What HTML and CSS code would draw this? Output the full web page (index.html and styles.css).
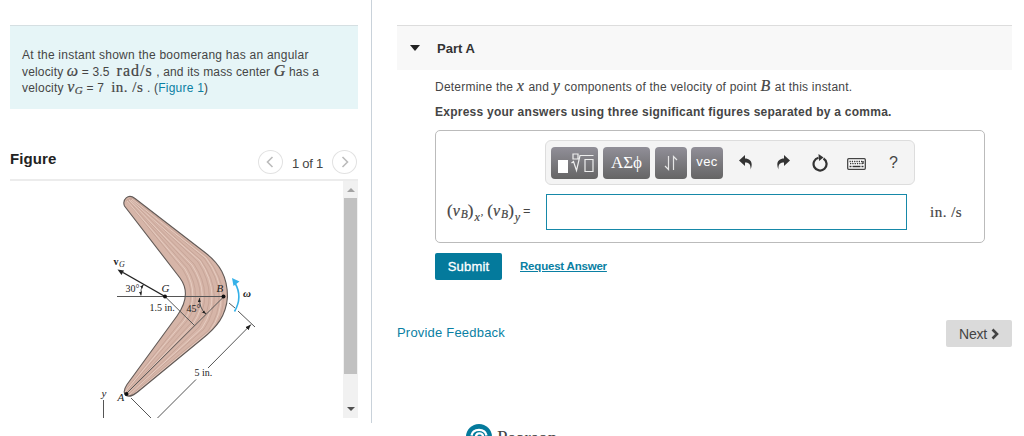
FILE: index.html
```
<!DOCTYPE html>
<html lang="en">
<head>
    <meta charset="UTF-8">
    <meta name="viewport" content="width=device-width, initial-scale=1.0">
    <title>Part A</title>
    <link rel="stylesheet" href="styles.css">
</head>
<body>
    <div class="page">
        <div class="sidebar">
            <div class="problem">
                <div class="line l1">At the instant shown the boomerang has an angular</div>
                <div class="line l2">velocity <i class="math">ω</i> = 3.5&nbsp; <span class="unit">rad/s</span> , and its mass center <i class="math">G</i> has a</div>
                <div class="line l3">velocity <i class="math">v<small>G</small></i> = 7&nbsp; <span class="unit">in. /s</span> . (<a href="#">Figure 1</a>)</div>
            </div>
            <div class="figure-header">
                <h2>Figure</h2>
                <div class="pager">
                    <button class="round"><svg width="8" height="12" viewBox="0 0 8 12"><path d="M6.5 1 1.5 6l5 5"/></svg></button>
                    <span>1 of 1</span>
                    <button class="round"><svg width="8" height="12" viewBox="0 0 8 12"><path d="m1.5 1 5 5-5 5"/></svg></button>
                </div>
            </div>
            <div class="figure-body">
                <svg class="drawing" width="333" height="237" viewBox="10 181 333 237">
                    <defs>
                        <clipPath id="wood">
                            <path d="M124.500 206C122 200 128 193 135 198.500L205 252.500C220 264 227.500 277 227.500 297C226 316 217 327 202 339L140 390C134 395 130 397.500 126 395.500C123 393 124 389 127 384.500L177 316C187 302 188 289 180 278Z"/>
                        </clipPath>
                        <marker id="arrow" viewBox="0 0 8 6" markerWidth="6" markerHeight="5" refX="8" refY="3" orient="auto-start-reverse" markerUnits="userSpaceOnUse"><path d="M0 0 8 3 0 6z" fill="#222"/></marker>
                        <marker id="tip" viewBox="0 0 8 6" markerWidth="4" markerHeight="3.500" refX="8" refY="3" orient="auto-start-reverse" markerUnits="userSpaceOnUse"><path d="M0 0 8 3 0 6z" fill="#222"/></marker>
                    </defs>
                    <!-- boomerang -->
                    <path fill="#d6b5a8" d="M124.500 206C122 200 128 193 135 198.500L205 252.500C220 264 227.500 277 227.500 297C226 316 217 327 202 339L140 390C134 395 130 397.500 126 395.500C123 393 124 389 127 384.500L177 316C187 302 188 289 180 278Z"/>
                    <g clip-path="url(#wood)" fill="none" stroke="#c29f92" stroke-width=".7">
                        <path d="M126 200 183 270Q199 296 182 320L125 391"/>
                        <path d="M127 199 187 268Q204 296 187 321L126 392"/>
                        <path d="M128 199 190 266Q210 296 191 323L127 393"/>
                        <path d="M129 198 194 264Q215 296 195 325L128 393"/>
                        <path d="M130 198 198 262Q220 296 199 327L129 394"/>
                        <path d="M131 198 201 260Q226 296 204 329L130 394"/>
                        <path d="M132 198 204 258Q232 296 208 331L131 395"/>
                        <path d="M133 198 207 257Q237 296 212 332L132 395"/>
                    </g>
                    <g clip-path="url(#wood)" fill="none" stroke="#ead2c7" stroke-width=".8">
                        <path d="M127 201 185 269Q201 296 184 321L125 392"/>
                        <path d="M129 200 192 265Q212 296 193 324L127 394"/>
                        <path d="M131 200 200 261Q223 296 202 328L129 395"/>
                        <path d="M132 199 206 258Q234 296 210 331L131 396"/>
                    </g>
                    <path fill="none" stroke="#625a57" stroke-width="1.100" d="M124.500 206C122 200 128 193 135 198.500L205 252.500C220 264 227.500 277 227.500 297C226 316 217 327 202 339L140 390C134 395 130 397.500 126 395.500C123 393 124 389 127 384.500L177 316C187 302 188 289 180 278Z"/>
                    <!-- construction and dimension lines -->
                    <g fill="none" stroke="#555" stroke-width="1">
                        <path d="M117 296.500H224M165 296.500 194.500 325.500M126 394 224 296.500"/>
                        <path d="M229 303l6 5M238 311l17 16M131 398l21 21M196 379.500 157 418.500M103.500 400v19"/>
                        <path d="M208 368 251 324.500" marker-end="url(#arrow)"/>
                        <path d="M143.500 284.500Q140 289 141 295.500" marker-start="url(#tip)" marker-end="url(#tip)"/>
                        <path d="M199.500 298Q199 308 206 314" marker-start="url(#tip)" marker-end="url(#tip)"/>
                    </g>
                    <path d="M165 296.500 123 272.500" stroke="#222" stroke-width="1.400"/>
                    <path d="M117.500 269.500 124 270.500 121.500 275z" fill="#222"/>
                    <path d="M234.500 311.500Q243 297 235 283" fill="none" stroke="#35b1e8" stroke-width="1.600"/>
                    <path d="M232 278 239.500 281.500 233.500 286z" fill="#35b1e8"/>
                    <g fill="#111">
                        <circle cx="165" cy="296.500" r="2"/>
                        <circle cx="223.500" cy="296.500" r="2"/>
                        <circle cx="126.500" cy="394" r="2"/>
                    </g>
                    <g class="labels">
                        <text x="113.500" y="265" class="bold">v</text>
                        <text x="119" y="267" class="ital sub">G</text>
                        <text x="125.500" y="292">30°</text>
                        <text x="161.500" y="292" class="ital">G</text>
                        <text x="216.500" y="292" class="ital">B</text>
                        <text x="243" y="297" class="bold ital">ω</text>
                        <text x="149.500" y="311">1.5 in.</text>
                        <text x="186.500" y="312">45°</text>
                        <text x="194.500" y="376">5 in.</text>
                        <text x="117.500" y="401" class="ital">A</text>
                        <text x="101.500" y="397" class="ital">y</text>
                    </g>
                </svg>
                <div class="scrollbar">
                    <svg width="8" height="4" viewBox="0 0 8 4"><path fill="#a3a3a3" d="M0 4 4 0l4 4z"/></svg>
                    <div class="thumb"></div>
                    <svg width="8" height="4" viewBox="0 0 8 4"><path fill="#505050" d="M0 0h8L4 4z"/></svg>
                </div>
            </div>
        </div>
        <div class="main">
            <div class="part-header">
                <svg width="10" height="6" viewBox="0 0 10 6"><path fill="#222" d="M0 0h10L5 6z"/></svg>
                <h3>Part A</h3>
            </div>
            <div class="part-body">
                <p class="question">Determine the <i class="math">x</i> and <i class="math">y</i> components of the velocity of point <i class="math">B</i> at this instant.</p>
                <p class="instruction">Express your answers using three significant figures separated by a comma.</p>
                <div class="answer-box">
                    <div class="toolbar">
                        <button class="tool wide">
                            <svg width="38" height="22" viewBox="0 0 38 22"><path fill="#fff" d="M2 8h10v13H2z"/><g fill="none" stroke="#eee" stroke-width="1.200"><path d="M17 2h5v5h-5zM15.500 11l2-1.500 3 9L24 3.500h13.500M29 7.500h8v12h-8z"/></g></svg>
                        </button>
                        <button class="tool wide greek">ΑΣϕ</button>
                        <button class="tool arrows"><svg width="14" height="16" viewBox="0 0 14 16"><path fill="none" stroke="#e6e6e6" stroke-width="1.200" d="M4.500 1v13.500M1 11l3.500 3.500V1M9.500 15V1.500M13 5 9.500 1.500V15"/></svg></button>
                        <button class="tool vec">vec</button>
                        <svg class="icon undo" width="14" height="15" viewBox="0 0 14 15"><path fill="#333" d="M0 5.500 6 0v3.500C11.500 3.500 14.500 8 11.500 14.500 12 9.500 10 7.500 6 7.500V11z"/></svg>
                        <svg class="icon redo" width="14" height="15" viewBox="0 0 14 15"><path fill="#333" d="M14 5.500 8 0v3.500C2.500 3.500-.5 8 2.500 14.500 2 9.500 4 7.500 8 7.500V11z"/></svg>
                        <svg class="icon reset" width="16" height="18" viewBox="0 0 16 18"><path fill="none" stroke="#333" stroke-width="2.200" d="M11.500 4.500A6.500 6.500 0 1 1 6.500 3.700"/><path fill="#333" d="M6.500 0 11.500 3.500 7 7z"/></svg>
                        <svg class="icon keyboard" width="19" height="12" viewBox="0 0 19 12"><rect x=".7" y=".7" width="17.600" height="10.600" rx="1" fill="#fff" stroke="#444" stroke-width="1.300"/><path stroke="#333" stroke-width="1.300" stroke-dasharray="1.300 1" d="M2.500 3.500h14M3 5.700h13.500"/><path stroke="#333" stroke-width="1.300" d="M2.500 8.500h2M5.500 8.500h8M14.500 8.500h2M16 3v3"/></svg>
                        <span class="help">?</span>
                    </div>
                    <div class="entry">
                        <label for="answer"><span class="paren">(</span><i>v<small>B</small></i><span class="paren">)</span><i class="index">x</i><span class="comma">,</span><span class="paren">(</span><i>v<small>B</small></i><span class="paren">)</span><i class="index">y</i><span class="equals">=</span></label>
                        <input type="text" id="answer">
                        <span class="unit">in. /s</span>
                    </div>
                </div>
                <div class="actions">
                    <button class="submit">Submit</button>
                    <a href="#">Request Answer</a>
                </div>
            </div>
            <div class="footer">
                <a href="#">Provide Feedback</a>
                <button class="next">Next <svg width="8" height="12" viewBox="0 0 8 12"><path fill="none" stroke="#444" stroke-width="2.600" d="m1.500 1.500 4.500 4.500-4.500 4.500"/></svg></button>
            </div>
            <div class="brand">
                <svg width="26" height="26" viewBox="0 0 26 26"><circle cx="13" cy="13" r="13" fill="#047a9c"/><path fill="none" stroke="#fff" stroke-width="2.400" d="M5.500 11.500C7 4 19 4 20.500 11.500M10 13c0-5 7-4.500 7-.5 0 3-3.500 2.500-3.500 5"/></svg>
                <span>Pearson</span>
            </div>
        </div>
    </div>
</body>
</html>
```
FILE: styles.css
```
* {
    box-sizing: border-box;
}
body {
    margin: 0;
    height: 436px;
    overflow: hidden;
    background: #fff;
    color: #454545;
    font-family: "Liberation Sans", Arial, sans-serif;
    font-size: 12px;
}
h2, h3, p {
    margin: 0;
}
button {
    border: 0;
    padding: 0;
    font-family: inherit;
}
svg {
    display: block;
    flex: none;
}
a {
    color: #0a7fa3;
    text-decoration: none;
}
.page {
    display: flex;
    height: 436px;
}
.sidebar {
    width: 372px;
    height: 423px;
    padding: 25px 13px 0 10px;
    border-right: 1px solid #c9d2da;
    flex: none;
}
.problem {
    height: 84px;
    padding: 21px 0 0 12px;
    background: #e6f5f7;
    border-top: 1px solid #d5dfe2;
}
.line {
    height: 16.5px;
    line-height: 16px;
    white-space: nowrap;
}
.l1 {
    letter-spacing: 0.24px;
}
.l2 {
    letter-spacing: 0.16px;
}
.l3 {
    letter-spacing: 0.22px;
}
.math, .unit {
    font-family: "Liberation Serif", "Times New Roman", serif;
    font-size: 16px;
    line-height: 1px;
    -webkit-text-stroke: 0.2px;
}
.unit {
    font-size: 15px;
    letter-spacing: 0.5px;
}
.l2 .unit {
    font-size: 16px;
    letter-spacing: 1px;
}
.math small {
    font-size: 11px;
    position: relative;
    top: 2px;
}
.figure-header {
    display: flex;
    justify-content: space-between;
    height: 72px;
    padding-top: 40px;
    border-bottom: 2px solid #ececec;
}
.figure-header h2 {
    font-size: 15px;
    line-height: 20px;
    color: #222;
    letter-spacing: 0.1px;
}
.pager {
    display: flex;
    align-items: center;
    gap: 9px;
    height: 26px;
    padding-right: 1px;
    font-size: 13px;
    letter-spacing: -0.25px;
}
.pager span {
    padding-top: 2px;
}
.round {
    display: flex;
    align-items: center;
    justify-content: center;
    width: 25px;
    height: 24px;
    border: 1px solid #e2e2e2;
    border-radius: 50%;
    background: #fff;
}
.round path {
    fill: none;
    stroke: #bbb;
    stroke-width: 1.6;
}
.figure-body {
    display: flex;
    height: 237px;
}
.labels text {
    font-family: "Liberation Serif", "Times New Roman", serif;
    font-size: 10px;
    fill: #222;
}
.labels .bold {
    font-weight: bold;
}
.labels .ital {
    font-style: italic;
    font-size: 11px;
}
.labels .sub {
    font-size: 8px;
}
.scrollbar {
    display: flex;
    flex-direction: column;
    align-items: center;
    width: 16px;
    height: 237px;
    padding: 7px 0;
    background: #f1f1f1;
}
.thumb {
    width: 13px;
    height: 177px;
    margin: 6px 0 33px;
    background: #c1c1c1;
}
.main {
    width: 640px;
    padding: 25px 0 0 25px;
}
.part-header {
    display: flex;
    align-items: center;
    height: 45px;
    padding-left: 13px;
    gap: 17px;
    background: #f8f8f8;
    border-top: 1px solid #ddd;
}
.part-header h3 {
    font-size: 13px;
    color: #333;
}
.part-body {
    padding: 9px 27px 0 38px;
}
.question, .instruction {
    white-space: nowrap;
    line-height: 16px;
}
.question {
    letter-spacing: 0.22px;
}
.question .math {
    letter-spacing: 1px;
}
.instruction {
    margin-top: 9px;
    font-weight: bold;
    letter-spacing: 0.25px;
}
.answer-box {
    width: 550px;
    height: 113px;
    margin-top: 10px;
    padding: 9px 0 0 11px;
    border: 1px solid #bbb;
    border-radius: 5px;
}
.toolbar {
    display: flex;
    align-items: center;
    width: 370px;
    height: 45px;
    margin-left: 98px;
    padding-left: 5px;
    background: #f4f4f4;
    border: 1px solid #ddd;
    border-radius: 6px;
}
.tool {
    display: flex;
    align-items: center;
    justify-content: center;
    width: 32px;
    height: 32px;
    margin-right: 5px;
    border-radius: 4px;
    background: linear-gradient(#918f98, #656565);
    color: #fff;
    font-size: 13px;
    flex: none;
}
.wide {
    width: 47px;
}
.greek {
    font-family: "Liberation Serif", "Times New Roman", serif;
    font-size: 17px;
}
.vec {
    margin-left: -1px;
    padding-bottom: 2px;
    letter-spacing: 0.5px;
}
.undo {
    margin-left: 11px;
}
.redo {
    margin-left: 23px;
}
.reset {
    margin-left: 22px;
}
.keyboard {
    margin: 3px 0 0 19px;
}
.help {
    margin-left: 23px;
    font-size: 16px;
}
.entry {
    display: flex;
    align-items: center;
    height: 36px;
    margin-top: 9px;
}
.entry label {
    display: flex;
    align-items: center;
    width: 99px;
    height: 36px;
    padding-bottom: 2px;
    font-family: "Liberation Serif", "Times New Roman", serif;
    font-size: 16px;
    -webkit-text-stroke: 0.2px;
}
.entry small {
    position: relative;
    top: 2px;
    margin-left: 1px;
    font-size: 11.5px;
}
.entry .index {
    font-size: 12px;
    padding: 12px 0 0 1px;
}
.entry .paren {
    font-size: 17px;
}
.comma {
    margin: 0 4px 0 1px;
    font-size: 10px;
}
.equals {
    margin-left: 3px;
    font-family: "Liberation Sans", Arial, sans-serif;
    font-size: 12px;
}
.entry input {
    width: 361px;
    height: 36px;
    margin-right: 23px;
    border: 1px solid #1688a8;
}
.actions {
    display: flex;
    align-items: center;
    gap: 18px;
    height: 27px;
    margin-top: 10px;
}
.submit {
    width: 67px;
    height: 27px;
    border-radius: 2px;
    background: #047a9c;
    color: #fff;
    font-size: 13px;
    letter-spacing: 0.2px;
    -webkit-text-stroke: 0.3px;
}
.actions a {
    padding-bottom: 2px;
    font-size: 11.5px;
    font-weight: bold;
    letter-spacing: -0.2px;
    text-decoration: underline;
}
.footer {
    display: flex;
    align-items: center;
    justify-content: space-between;
    height: 27px;
    margin-top: 40px;
    font-size: 13px;
}
.footer a {
    padding-bottom: 2px;
    letter-spacing: 0.2px;
}
.next {
    display: flex;
    align-items: center;
    justify-content: center;
    gap: 4px;
    width: 66px;
    height: 27px;
    border-radius: 2px;
    background: #dadada;
    color: #444;
    font-size: 14px;
    letter-spacing: -0.2px;
}
.brand {
    display: flex;
    gap: 5px;
    padding: 77px 0 0 69px;
}
.brand span {
    padding-top: 1px;
    font-family: "Liberation Serif", "Times New Roman", serif;
    font-size: 19px;
    line-height: 26px;
}
```
